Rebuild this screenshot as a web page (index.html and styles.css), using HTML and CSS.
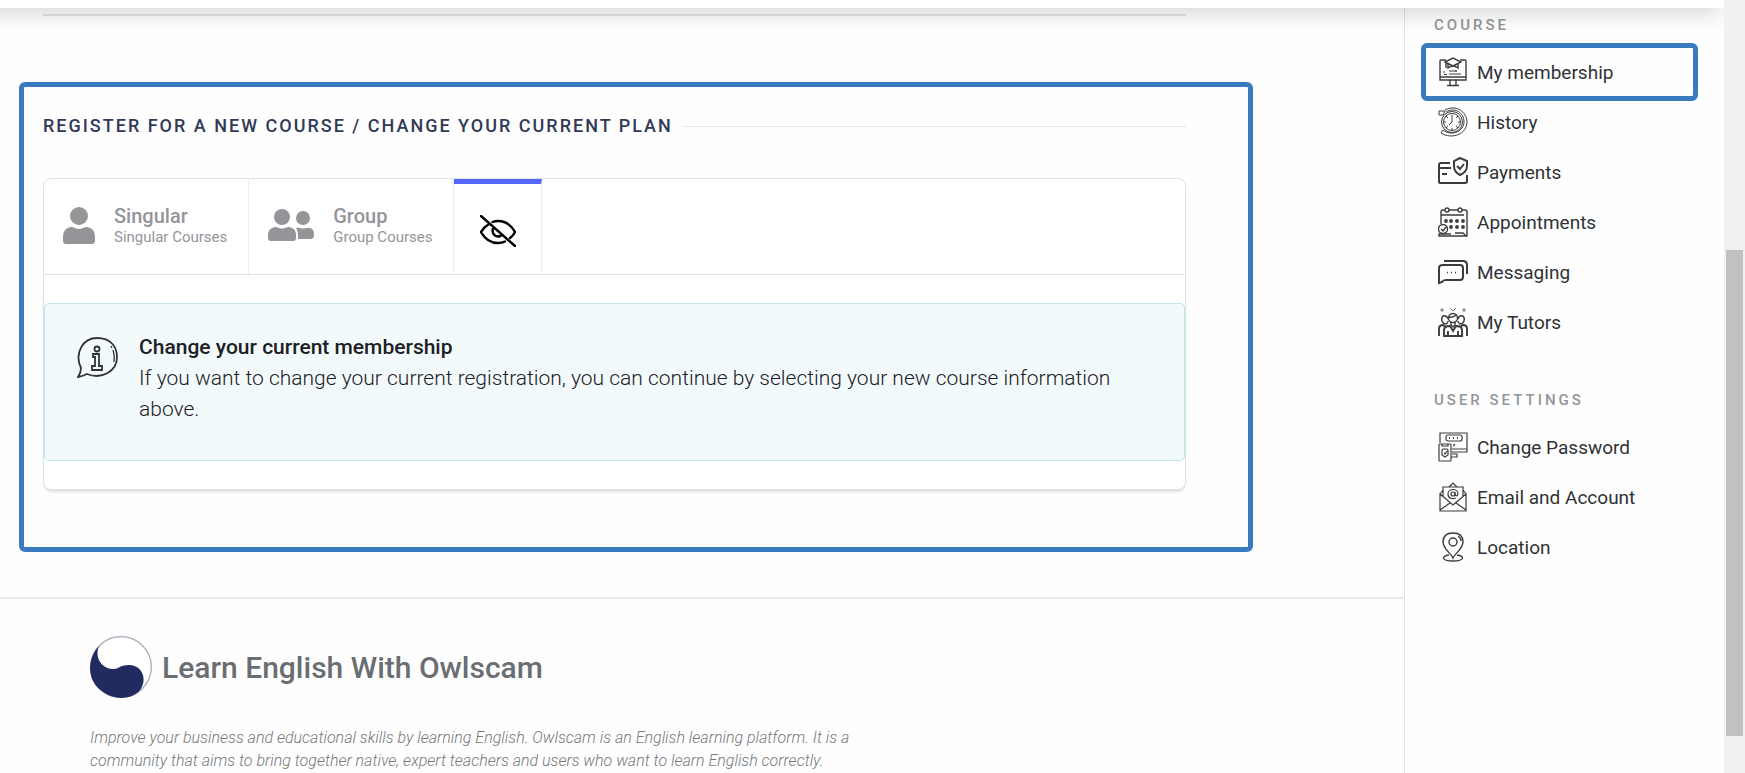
FILE: index.html
```html
<!DOCTYPE html>
<html lang="en">
<head>
    <meta charset="utf-8">
    <title>My membership</title>
    <link rel="stylesheet" href="styles.css">
</head>
<body>
    <div class="page">
        <div class="content">
            <header class="navbar"></header>
            <div class="layout">
                <main class="main">
                    <hr class="section-rule">
                    <section class="register">
                        <h2 class="separator">Register for a new course / Change your current plan</h2>
                        <div class="card">
                            <div class="tabs">
                                <button type="button" class="tab">
                                    <svg class="tab-icon" width="34" height="38" viewBox="0 0 34 38" fill="#939599"><ellipse cx="17" cy="9" rx="9" ry="9"/><path d="M1 34V30Q1 21 9 20Q11 20 13 21Q17 23 21 21Q23 20 25 20Q33 21 33 30V34Q33 37 30 37H4Q1 37 1 34Z"/></svg>
                                    <span class="tab-text"><strong>Singular</strong><small>Singular Courses</small></span>
                                </button>
                                <button type="button" class="tab">
                                    <svg class="tab-icon" width="48" height="38" viewBox="0 0 48 38" fill="#939599"><circle cx="15" cy="10" r="8"/><path d="M1 31V28Q1 21 8 20Q10 20 12 21Q15 22 18 21Q20 20 22 20Q29 21 29 28V31Q29 34 26 34H4Q1 34 1 31Z"/><circle cx="36" cy="11" r="7"/><path d="M29 21Q31 20 33 21Q36 22 39 21Q47 19 47 28Q47 32 43 32H31V28Q31 24 29 21Z"/></svg>
                                    <span class="tab-text"><strong>Group</strong><small>Group Courses</small></span>
                                </button>
                                <button type="button" class="tab active" aria-label="Hide courses">
                                    <svg width="36" height="32" viewBox="0 0 36 32" fill="none" stroke="#000" stroke-width="2.4" stroke-linecap="round" stroke-linejoin="round"><path d="M1 1L35 31M12.500 7Q15 6 18 6C26 6 31 10 35 17Q33 21 30 23M9 9Q4 12 1 17C5 24 11 28 18 28Q22 28 25 26.500M13 13.500Q12 16 13.500 19Q16 22.500 20.500 21"/></svg>
                                </button>
                            </div>
                            <div class="card-body">
                                <div class="alert">
                                    <svg class="alert-icon" width="42" height="42" viewBox="0 0 42 42" fill="none" stroke="#333" stroke-width="1.800"><path d="M1 40Q4 36 4 31C-3 16 6 1 20 1S40 10 40 20C40 34 25 43 10 37Q6 39 1 40Z"/><circle cx="20" cy="12" r="2.500"/><path d="M16 17H22V29H25V33H15V29H18V20H16V17Z"/><path d="M36 13Q38 19 37 25M34 9L35 11" stroke-width="1.300"/></svg>
                                    <div class="alert-text">
                                        <strong>Change your current membership</strong>
                                        <p>If you want to change your current registration, you can continue by selecting your new course information above.</p>
                                    </div>
                                </div>
                            </div>
                        </div>
                    </section>
                    <footer class="footer">
                        <div class="brand">
                            <svg width="62" height="62" viewBox="0 0 62 62"><circle cx="31" cy="31" r="30.300" fill="#fff" stroke="#a9abb8" stroke-width="1.300"/><path d="M9 10C-4 24-3 46 13 56C27 66 44 62 50 54C58 43 52 29 39 29C29 29 30 33 23 33C12 33 4 22 9 10Z" fill="#222b60"/></svg>
                            <span>Learn English With Owlscam</span>
                        </div>
                        <p class="about">Improve your business and educational skills by learning English. Owlscam is an English learning platform. It is a community that aims to bring together native, expert teachers and users who want to learn English correctly.</p>
                    </footer>
                </main>
                <aside class="sidebar">
                    <h3>Course</h3>
                    <nav>
                        <a href="#" class="active">
                            <svg viewBox="0 0 30 30"><path d="M8 3H3Q2 3 2 4V23H28V4Q28 3 27 3H22M2 20H28M12 23V28M18 23V28M9 28.500H21"/><path d="M7 5L15 1L23 5L15 9ZM10 7V11Q15 7 20 11V7M8 6V11"/><path d="M11 14H19M6 14V16M6 17.500H9M11 17H23M17 14H19" stroke-width="1"/></svg>
                            My membership
                        </a>
                        <a href="#">
                            <svg viewBox="0 0 30 30"><g stroke-width="1"><circle cx="14" cy="15" r="10.500"/><circle cx="14" cy="15" r="8.500"/><path d="M14 8V15L11 18M14 23V21M6 15H8M20 15H22M8 9L10 11M20 9L18 11M8 21L10 19M20 21L18 19"/><path d="M7 3C18-3 29 5 29 15C29 27 14 33 3 26L5 23C14 30 26 24 26 15C26 5 16 0 8 5M1 4H7L5 8H1Z"/></g></svg>
                            History
                        </a>
                        <a href="#">
                            <svg viewBox="0 0 30 30"><g stroke-width="2"><path d="M12 6H3Q1 6 1 8V25Q1 26 3 26H27Q29 26 29 24V18M1 11H13M4 17H9"/><path d="M22 1L16 4V9Q16 15 22 18Q29 15 29 9V4ZM19 9L22 12L26 7"/></g></svg>
                            Payments
                        </a>
                        <a href="#">
                            <svg viewBox="0 0 30 30"><path d="M3 17V5Q3 3 5 3H7M11 3H20M24 3H27Q29 3 29 5V29H1V27H13M3 8H26M17 26H25L28 29"/><circle cx="9" cy="3" r="2"/><circle cx="22" cy="3" r="2"/><g fill="#555"><circle cx="8" cy="14" r="1.200"/><circle cx="13" cy="14" r="1.200"/><circle cx="19" cy="14" r="1.200"/><circle cx="25" cy="14" r="1.200"/><circle cx="13" cy="20" r="1.200"/><circle cx="19" cy="20" r="1.200"/><circle cx="25" cy="20" r="1.200"/></g><circle cx="5" cy="22" r="4.500"/><path d="M3 22L5 24L8 20"/></svg>
                            Appointments
                        </a>
                        <a href="#">
                            <svg viewBox="0 0 30 30"><g stroke-width="2"><path d="M5 8H22Q25 8 25 11V20Q25 23 22 23H8Q5 23 4 25L1 26V11Q1 8 5 8Z"/><path d="M6 4H25Q29 4 29 8V17"/></g><path d="M9 15.500H10M13 15.500H14M17 15.500H18" stroke-width="1.600"/></svg>
                            Messaging
                        </a>
                        <a href="#">
                            <svg viewBox="0 0 30 30"><circle cx="15" cy="11" r="4.500"/><path d="M11 10Q15 11 18 8M13 15V18L15 20L17 18V15M10 12Q9 8 5 9Q3 11 4 14Q5 17 8 17Q10 16 10 14M20 12Q21 8 25 9Q27 11 26 14Q25 17 22 17Q20 16 20 14"/><path d="M6 29V23Q6 19 12 19L15 24L18 19Q24 19 24 23V29ZM1 29V22Q1 18 5 18L8 20M29 29V22Q29 18 25 18L22 20M10 24V29M20 24V29" stroke-width="1.900"/><path d="M4 1V5M2 3H6M26 1V5M24 3H28M12 1L15 4L18 1" stroke="#777" stroke-width="1"/></svg>
                            My Tutors
                        </a>
                    </nav>
                    <h3>User settings</h3>
                    <nav>
                        <a href="#">
                            <svg viewBox="0 0 30 30"><g stroke-width="1.200"><path d="M2 11V1H29V20H14M14 17H29M14 22H19V25H13"/><rect x="8" y="3" width="16" height="6" rx="2"/><rect x="1" y="12" width="12" height="17" rx="1"/><path d="M4 12V14H10V12M5 17H9L10 18V23L7 25L4 23V18ZM6 21L7 22L9 19M15 14L17 12"/></g><path d="M11 6H12M15 6H16M19 6H20" stroke-width="2"/></svg>
                            Change Password
                        </a>
                        <a href="#">
                            <svg viewBox="0 0 30 30"><g stroke-width="1.200"><path d="M2 11V29H28V11M2 12L15 23L28 12M2 28L12 21M28 28L18 21M5 14V5H25V14M11 5L15 1L19 5M5 8L2 12M25 8L28 12"/><circle cx="15" cy="12" r="2"/><path d="M17 10V13Q19 15 20 12C20 6 10 6 10 12C10 17 15 17 18 16"/></g></svg>
                            Email and Account
                        </a>
                        <a href="#">
                            <svg viewBox="0 0 30 30"><path d="M15 26C13 21 5 17 5 10C5 4 9 1 15 1S25 4 25 10C25 17 17 21 15 26Z"/><circle cx="15" cy="10" r="4"/><path d="M11 23C3 24 3 29 15 29S27 24 19 23M20 4Q23 6 23 9"/></svg>
                            Location
                        </a>
                    </nav>
                </aside>
            </div>
        </div>
        <div class="scrollbar"><div class="thumb"></div></div>
    </div>
</body>
</html>
```
FILE: styles.css
```css
* {
    box-sizing: border-box;
}
body {
    margin: 0;
    font-family: Roboto, "Liberation Sans", sans-serif;
    color: #303235;
    background: #fefefe;
}
h2, h3, p {
    margin: 0;
}
.page {
    display: flex;
    height: 100vh;
    overflow: hidden;
}
.content {
    flex: 1;
    display: flex;
    flex-direction: column;
    min-width: 0;
    overflow: hidden;
}
/* only the bottom edge of the bar shows */
.navbar {
    position: relative;
    z-index: 2;
    flex: none;
    height: 70px;
    margin: -62px 0 0 -24px;
    background: #fff;
    box-shadow: 0 8px 24px -4px rgba(0, 0, 0, 0.18);
}
.layout {
    flex: 1;
    display: flex;
    min-height: 0;
}
.main {
    flex: 1;
    min-width: 0;
}
.section-rule {
    height: 2px;
    margin: 6px 218px 66px 43px;
    border: none;
    background: #e0e5e9;
}

/* Register panel */
.register {
    margin: 0 151px 45px 19px;
    padding: 27px 62px 57px 19px;
    border: 5px solid #3a7abf;
    border-radius: 6px;
}
.separator {
    display: flex;
    align-items: center;
    gap: 10px;
    margin-bottom: 40px;
    font-size: 18px;
    font-weight: 500;
    line-height: 24px;
    letter-spacing: 2px;
    text-transform: uppercase;
    color: #303956;
}
.separator::after {
    content: "";
    flex: 1;
    height: 1px;
    background: #e3e4e6;
}
.card {
    border: 1px solid #dfe2e6;
    border-radius: 8px;
    background: #fff;
    box-shadow: 0 3px 3px -1px rgba(0, 0, 0, 0.12);
}
.tabs {
    display: flex;
    height: 96px;
    border-bottom: 1px solid #dfe2ea;
}
.tab {
    display: flex;
    align-items: center;
    gap: 18px;
    padding: 0 21px 2px 18px;
    border: none;
    border-right: 1px solid #e9ebee;
    background: none;
    font-family: inherit;
    text-align: left;
    color: #949599;
    cursor: pointer;
}
.tab.active {
    padding: 3px 25px 0 26px;
    border-top: 5px solid #5567ff;
}
.tab-text strong,
.tab-text small {
    display: block;
}
.tab-text strong {
    font-size: 20px;
    font-weight: 500;
    line-height: 22px;
}
.tab-text small {
    font-size: 15px;
    line-height: 20px;
}
.card-body {
    padding: 28px 0;
}
.alert {
    display: flex;
    gap: 20px;
    padding: 28px 32px 35px;
    border: 1px solid #bfe4e8;
    border-radius: 5px;
    background: #f2fafc;
}
.alert-icon {
    flex: none;
    margin-top: 5px;
}
.alert-text {
    font-size: 21px;
    font-weight: 300;
    line-height: 31px;
    color: #1d2024;
}
.alert-text strong {
    font-weight: 500;
}

/* Footer */
.footer {
    padding: 37px 90px 0;
    border-top: 2px solid #e5eaef;
}
.brand {
    display: flex;
    align-items: center;
    gap: 10px;
    margin-bottom: 28px;
    font-size: 30px;
    font-weight: 500;
    color: #6a6e73;
}
.about {
    max-width: 780px;
    font-size: 16px;
    font-style: italic;
    font-weight: 300;
    line-height: 23px;
    color: #77797c;
}

/* Sidebar */
.sidebar {
    width: 320px;
    padding: 5px 26px 0 16px;
    border-left: 1px solid #e0e2e4;
}
.sidebar h3 {
    padding-left: 13px;
    font-size: 15px;
    font-weight: 500;
    line-height: 24px;
    letter-spacing: 3px;
    text-transform: uppercase;
    color: #929699;
}
.sidebar nav {
    display: flex;
    flex-direction: column;
    margin: 10px 0 41px;
}
.sidebar a {
    display: flex;
    align-items: center;
    gap: 9px;
    height: 50px;
    padding-left: 17px;
    font-size: 19px;
    color: #303235;
    text-decoration: none;
}
.sidebar a.active {
    height: 58px;
    margin: -4px 0;
    padding-left: 12px;
    border: 5px solid #3a7abf;
    border-radius: 6px;
}
.sidebar svg {
    width: 30px;
    height: 30px;
    fill: none;
    stroke: #3c3c3c;
    stroke-width: 1.4;
}

/* Scrollbar */
.scrollbar {
    width: 21px;
    padding: 250px 2px 0;
    background: #f1f1f1;
}
.thumb {
    height: 93%;
    background: #c1c1c1;
}
```
